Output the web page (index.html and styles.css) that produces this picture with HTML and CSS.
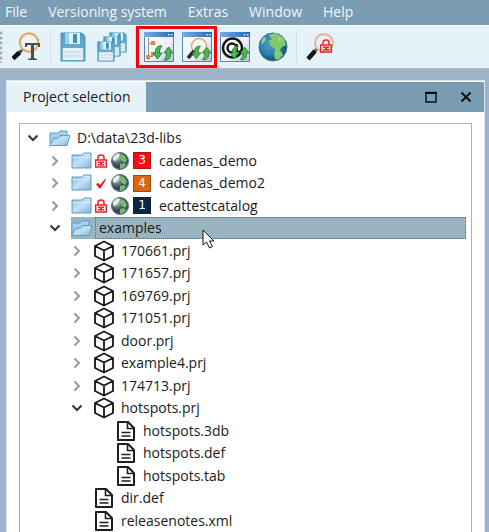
FILE: index.html
```html
<!DOCTYPE html>
<html lang="en">
<head>
<meta charset="utf-8">
<meta name="viewport" content="width=device-width, initial-scale=1">
<title>Project selection</title>
<link rel="stylesheet" href="styles.css">
</head>
<body>
<svg class="defs" aria-hidden="true">
  <defs>
    <linearGradient id="g-folder" x1="0" y1="0" x2="1" y2="1"><stop offset="0" stop-color="#8ebde0"/><stop offset=".5" stop-color="#c5e0f3"/><stop offset="1" stop-color="#7fb3dc"/></linearGradient>
    <linearGradient id="g-bar" x1="0" x2="1"><stop offset="0" stop-color="#77aee6"/><stop offset="1" stop-color="#2468b5"/></linearGradient>
    <linearGradient id="g-win" x1="0" y1="0" x2="1" y2="1"><stop offset="0" stop-color="#fff"/><stop offset=".6" stop-color="#edf0f7"/><stop offset="1" stop-color="#aebbd5"/></linearGradient>
    <linearGradient id="g-disk" x1="0" y1="0" x2="0" y2="1"><stop offset="0" stop-color="#52a1c6"/><stop offset="1" stop-color="#74b6d2"/></linearGradient>
    <radialGradient id="g-lens"><stop offset="0" stop-color="#fff"/><stop offset="1" stop-color="#dbe8ef"/></radialGradient>
    <radialGradient id="g-sea" cx=".4" cy=".4"><stop offset="0" stop-color="#4b9fc5"/><stop offset=".75" stop-color="#2c7eae"/><stop offset="1" stop-color="#205d84"/></radialGradient>
    <radialGradient id="g-night" cx=".3" cy=".25" r=".8"><stop offset="0" stop-color="#dce2e6"/><stop offset=".4" stop-color="#66747f"/><stop offset=".7" stop-color="#2b4054"/><stop offset="1" stop-color="#2e6795"/></radialGradient>
  </defs>
  <symbol id="i-open" viewBox="0 0 12 8"><path d="M1.500 1.500 6 6l4.500-4.500" fill="none" stroke="#333" stroke-width="2"/></symbol>
  <symbol id="i-closed" viewBox="0 0 8 12"><path d="M1.500 1.500 6 6l-4.500 4.500" fill="none" stroke="#999" stroke-width="2"/></symbol>
  <symbol id="i-folder" viewBox="0 0 22 18"><path d="M1 3h10l2-2h7v15H1z" fill="url(#g-folder)" stroke="#5b9dcc"/><path d="M1.500 5.500h18M13 2.500h6" stroke="#d8ecf8"/></symbol>
  <symbol id="i-folder-open" viewBox="0 0 22 18"><path d="M1 16V4h8l2-2h7v5" fill="#a8cfeb" stroke="#5b9dcc"/><path d="M1 16.500 4.500 9H9l2-2.500h10L18 16.500z" fill="url(#g-folder)" stroke="#5b9dcc"/></symbol>
  <symbol id="i-cube" viewBox="0 0 22 22"><path d="M11 1.500 20 6v10l-9 4.500L2 16V6zM2 6l9 4.500L20 6M11 10.500v10" fill="none" stroke="#161616" stroke-width="1.800" stroke-linejoin="round"/></symbol>
  <symbol id="i-file" viewBox="0 0 22 22"><path d="M3 2h10l6 6v12H3z" fill="#fff" stroke="#1e1e1e" stroke-width="2" stroke-linejoin="round"/><path d="M12.500 2.500V8.500H18.500M6.500 12.500h9M6.500 16h9" fill="none" stroke="#1e1e1e" stroke-width="1.600"/></symbol>
  <symbol id="i-lock" viewBox="0 0 14 14"><path d="M4 6V3.500Q4 1 7 1t3 2.500V6M1.700 6h10.600v7H1.700zM4 8.200h6M4 10.800h6" fill="none" stroke="#f3202a" stroke-width="1.500"/><path d="M6 8h2v3H6z" fill="#f3202a"/></symbol>
  <symbol id="i-check" viewBox="0 0 14 14"><path d="m2 8 2-1 2 2 5-6 1 .5L6 13z" fill="#f00d16"/></symbol>
  <symbol id="i-globe-small" viewBox="0 0 20 20"><circle cx="10" cy="10" r="8.500" fill="url(#g-night)" stroke="#5d6f7b"/><path d="m3 6 4-3.500 3 .5-2 4-3 3-2-1z" fill="#e6edf0"/><path d="m11 3 4 2 2 4-2 3-3-2-2-3zM10 13l4-1 2 2-3 3-3 1z" fill="#79bb62"/></symbol>
  <symbol id="i-arrows" viewBox="0 0 20 16"><path d="M9 1C5 0 2 3 2.500 8H0l4.500 6L9 8H6.500C6.500 5 7 3 9 1zM11 15c4 1 7-2 6.500-7H20l-4.500-6L11 8h2.500c0 3-.5 5-2.500 7z" fill="#4db652" stroke="#1f7c34" stroke-width=".9"/></symbol>
  <symbol id="i-window" viewBox="0 0 30 30"><path d="M.5.5h29v29H.5z" fill="url(#g-win)" stroke="#5684b8"/><path d="M0 0h30v5H0z" fill="url(#g-bar)"/><path d="M24 2h1.500v1.500H24zM27 2h1.500v1.500H27z" fill="#e7f4ff"/></symbol>
  <symbol id="i-disk" viewBox="0 0 26 30"><path d="M1 1h21l3 3v25H1z" fill="url(#g-disk)" stroke="#4795bd"/><path d="M5 1h15v11H5z" fill="#9cd2e7"/><path d="M9 1h11v11H9z" fill="#dcf0f6"/><path d="M13 2h4v9h-4z" fill="#438fb7"/><path d="M3 16h20v12H3z" fill="#e6f0f4"/><path d="M4 20h18M4 24h18" stroke="#bad1dc"/></symbol>
</svg>

<nav class="menubar" aria-label="Main menu">
  <button type="button">File</button>
  <button type="button">Versioning system</button>
  <button type="button">Extras</button>
  <button type="button">Window</button>
  <button type="button">Help</button>
</nav>

<div class="toolbar" role="toolbar" aria-label="Tools">
  <span class="grip"></span>
  <button type="button" aria-label="Text search"><svg viewBox="0 0 30 30"><path d="m10 18-4 4" stroke="#444" stroke-width="3"/><path d="m7.500 20.500-6.500 6" stroke="#111" stroke-width="4.500"/><circle cx="17" cy="10.500" r="9.300" fill="url(#g-lens)" stroke="#e8a561" stroke-width="2"/><path d="M13 11h15v4h-1.500l-1-2H22v13l3 1v1h-9v-1l3-1V13h-3.500l-1 2H13z" fill="#4a4e51"/></svg></button>
  <span class="separator"></span>
  <button type="button" aria-label="Save"><svg viewBox="0 0 30 30"><use href="#i-disk" x="1" width="26" height="30"/></svg></button>
  <button type="button" aria-label="Save all"><svg viewBox="0 0 30 30"><use href="#i-disk" x="12" width="18" height="21"/><use href="#i-disk" x="6" y="4" width="18" height="21"/><use href="#i-disk" y="9" width="18" height="21"/></svg></button>
  <span class="separator"></span>
  <div class="marked">
    <button type="button" aria-label="Update structure"><svg viewBox="0 0 30 30"><use href="#i-window" width="30" height="30"/><path d="M4.500 6v22M5 11.500h5M5 24.500h4" fill="none" stroke="#8f9398"/><path d="M7 9h4v4H7zM2 23h4v4H2zM7 20h3v4H7z" fill="#de8b2d"/><use href="#i-arrows" x="9" y="13" width="20" height="16"/></svg></button>
    <button type="button" aria-label="Update search index"><svg viewBox="0 0 30 30"><use href="#i-window" width="30" height="30"/><circle cx="17" cy="14" r="7.500" fill="#f9f6f2" stroke="#dfaa7c" stroke-width="1.500"/><path d="m12 19-6 7" stroke="#292929" stroke-width="3.500"/><use href="#i-arrows" x="10" y="13" width="19" height="16"/></svg></button>
  </div>
  <button type="button" aria-label="Update classification"><svg viewBox="0 0 30 30"><use href="#i-window" width="30" height="30"/><circle cx="12.500" cy="16" r="9.500" fill="#fff" stroke="#171717" stroke-width="2.500"/><circle cx="12" cy="16" r="4.500" fill="none" stroke="#171717" stroke-width="2.500"/><path d="M17 12v7q2 2 4-1" fill="none" stroke="#171717" stroke-width="2"/><use href="#i-arrows" x="10" y="13" width="19" height="16"/></svg></button>
  <button type="button" aria-label="Online catalog"><svg viewBox="0 0 30 30"><circle cx="15" cy="15" r="14" fill="url(#g-sea)" stroke="#3e7790"/><path d="m10 3 8-2 8 5 2 7-4 2-3 4-3 1-1-3-4-3-2-5 3-2zM17 18l6 1 2 4-5 5-3-1-1-5z" fill="#83c96e"/><path d="m5 6 3-1-1 4-4 4zM20 5l3 2-2 2z" fill="#a8d993"/></svg></button>
  <span class="separator"></span>
  <button type="button" aria-label="Restricted search"><svg viewBox="0 0 30 30"><path d="m12 17-4 4" stroke="#555" stroke-width="3"/><path d="m10 19-7 8" stroke="#161616" stroke-width="4.500"/><circle cx="19" cy="11" r="9" fill="url(#g-lens)" stroke="#e8b18c" stroke-width="2"/><use href="#i-lock" x="14" y="7" width="14" height="14"/></svg></button>
</div>

<main class="panel">
  <header class="titlebar">
    <h1>Project selection</h1>
    <div class="window-buttons">
      <button type="button" aria-label="Maximize"><svg viewBox="0 0 12 12"><path d="M1 1.500h10V11H1z" fill="none" stroke="#111" stroke-width="1.500"/><path d="M0 1h12v2H0z"/></svg></button>
      <button type="button" aria-label="Close"><svg viewBox="0 0 12 12"><path d="m1.500 1.500 9 9m0-9-9 9" stroke="#111" stroke-width="2"/></svg></button>
    </div>
  </header>
  <ul class="tree" aria-label="Projects">
    <li class="row level-0"><button class="toggle" type="button" aria-label="Collapse"><svg class="open"><use href="#i-open"/></svg></button><div class="item"><svg class="icon folder"><use href="#i-folder-open"/></svg><span class="name">D:\data\23d-libs</span></div></li>
    <li class="row level-1"><button class="toggle" type="button" aria-label="Expand"><svg class="closed"><use href="#i-closed"/></svg></button><div class="item"><svg class="icon folder"><use href="#i-folder"/></svg><svg class="state"><use href="#i-lock"/></svg><svg class="globe"><use href="#i-globe-small"/></svg><span class="badge red">3</span><span class="name">cadenas_demo</span></div></li>
    <li class="row level-1"><button class="toggle" type="button" aria-label="Expand"><svg class="closed"><use href="#i-closed"/></svg></button><div class="item"><svg class="icon folder"><use href="#i-folder"/></svg><svg class="state"><use href="#i-check"/></svg><svg class="globe"><use href="#i-globe-small"/></svg><span class="badge orange">4</span><span class="name">cadenas_demo2</span></div></li>
    <li class="row level-1"><button class="toggle" type="button" aria-label="Expand"><svg class="closed"><use href="#i-closed"/></svg></button><div class="item"><svg class="icon folder"><use href="#i-folder"/></svg><svg class="state"><use href="#i-lock"/></svg><svg class="globe"><use href="#i-globe-small"/></svg><span class="badge navy">1</span><span class="name">ecattestcatalog</span></div></li>
    <li class="row level-1"><button class="toggle" type="button" aria-label="Collapse"><svg class="open"><use href="#i-open"/></svg></button><div class="item selected"><svg class="icon folder"><use href="#i-folder-open"/></svg><span class="name">examples</span><svg class="pointer" viewBox="0 0 13 20" aria-hidden="true"><path d="M1 1v15l3.500-3 3 6 3-1.500-3-5.500H12z" fill="#fff" stroke="#111"/></svg></div></li>
    <li class="row level-2"><button class="toggle" type="button" aria-label="Expand"><svg class="closed"><use href="#i-closed"/></svg></button><div class="item"><svg class="icon"><use href="#i-cube"/></svg><span class="name">170661.prj</span></div></li>
    <li class="row level-2"><button class="toggle" type="button" aria-label="Expand"><svg class="closed"><use href="#i-closed"/></svg></button><div class="item"><svg class="icon"><use href="#i-cube"/></svg><span class="name">171657.prj</span></div></li>
    <li class="row level-2"><button class="toggle" type="button" aria-label="Expand"><svg class="closed"><use href="#i-closed"/></svg></button><div class="item"><svg class="icon"><use href="#i-cube"/></svg><span class="name">169769.prj</span></div></li>
    <li class="row level-2"><button class="toggle" type="button" aria-label="Expand"><svg class="closed"><use href="#i-closed"/></svg></button><div class="item"><svg class="icon"><use href="#i-cube"/></svg><span class="name">171051.prj</span></div></li>
    <li class="row level-2"><button class="toggle" type="button" aria-label="Expand"><svg class="closed"><use href="#i-closed"/></svg></button><div class="item"><svg class="icon"><use href="#i-cube"/></svg><span class="name">door.prj</span></div></li>
    <li class="row level-2"><button class="toggle" type="button" aria-label="Expand"><svg class="closed"><use href="#i-closed"/></svg></button><div class="item"><svg class="icon"><use href="#i-cube"/></svg><span class="name">example4.prj</span></div></li>
    <li class="row level-2"><button class="toggle" type="button" aria-label="Expand"><svg class="closed"><use href="#i-closed"/></svg></button><div class="item"><svg class="icon"><use href="#i-cube"/></svg><span class="name">174713.prj</span></div></li>
    <li class="row level-2"><button class="toggle" type="button" aria-label="Collapse"><svg class="open"><use href="#i-open"/></svg></button><div class="item"><svg class="icon"><use href="#i-cube"/></svg><span class="name">hotspots.prj</span></div></li>
    <li class="row level-3"><span class="toggle"></span><div class="item"><svg class="icon"><use href="#i-file"/></svg><span class="name">hotspots.3db</span></div></li>
    <li class="row level-3"><span class="toggle"></span><div class="item"><svg class="icon"><use href="#i-file"/></svg><span class="name">hotspots.def</span></div></li>
    <li class="row level-3"><span class="toggle"></span><div class="item"><svg class="icon"><use href="#i-file"/></svg><span class="name">hotspots.tab</span></div></li>
    <li class="row level-2"><span class="toggle"></span><div class="item"><svg class="icon"><use href="#i-file"/></svg><span class="name">dir.def</span></div></li>
    <li class="row level-2"><span class="toggle"></span><div class="item"><svg class="icon"><use href="#i-file"/></svg><span class="name">releasenotes.xml</span></div></li>
  </ul>
</main>
</body>
</html>
```
FILE: styles.css
```css
* { box-sizing: border-box; }
html, body { height: 100%; }
body {
  margin: 0;
  display: flex;
  flex-direction: column;
  overflow: hidden;
  background: #9bb4ca;
  color: #1a1a1a;
  font: 14px/20px "Open Sans", "Noto Sans", sans-serif;
}
button {
  margin: 0;
  padding: 0;
  border: 0;
  background: none;
  color: inherit;
  font: inherit;
}
svg { display: block; flex: none; }
.defs { position: absolute; width: 0; height: 0; }

.menubar {
  display: flex;
  flex: none;
  gap: 21px;
  height: 25px;
  padding: 0 5px 2px;
  background: #7b9db3;
  color: #f0f6fa;
}

.toolbar {
  display: flex;
  flex: none;
  align-items: center;
  gap: 8px;
  height: 44px;
  border-top: 1px solid #fff;
  border-bottom: 1px solid #b3b9bd;
  background: #e5f2f8;
}
.toolbar button, .toolbar button svg { width: 30px; height: 30px; }
.grip {
  width: 4px;
  height: 32px;
  background: radial-gradient(circle at 1px 2px, #a4adb2 1px, transparent 2px) 0 0 / 4px 5px;
}
.separator { width: 1px; height: 32px; background: #d3dde3; }
.marked { position: relative; display: flex; gap: 8px; }
.marked::after {
  content: "";
  position: absolute;
  inset: -6px -5px -6px -8px;
  border: 3px solid #fb0006;
  pointer-events: none;
}

.panel {
  display: flex;
  flex: 1 0 auto;
  flex-direction: column;
  margin: 11px 4px 0 6px;
  border: 1px solid #dce6ed;
  border-bottom: 0;
  background: #fff;
}
.titlebar {
  display: flex;
  justify-content: space-between;
  height: 31px;
  border-top: 1px solid #fff;
  background: #7b9db3;
}
.titlebar h1 {
  margin: 0;
  padding: 5px 16px;
  background: #e5f2f8;
  font-size: 14px;
  font-weight: 400;
  line-height: 20px;
}
.window-buttons { display: flex; gap: 23px; padding-right: 12px; }
.window-buttons svg { width: 12px; height: 12px; }

.tree {
  display: grid;
  flex: 1;
  grid-template-rows: repeat(9, 22px 23px);
  margin: 11px 12px 0;
  padding: 3px 5px 0 3px;
  border: 1px solid #b0b0b0;
  border-bottom: 0;
  list-style: none;
}
.row { display: flex; align-items: stretch; }
.level-1 { padding-left: 22px; }
.level-2 { padding-left: 44px; }
.level-3 { padding-left: 66px; }
.toggle {
  display: grid;
  place-items: center;
  width: 20px;
  margin-right: 6px;
}
.open { width: 12px; height: 8px; }
.closed { width: 8px; height: 12px; }
.item { position: relative; display: flex; flex: 1; align-items: center; }
.icon { width: 22px; height: 22px; }
.folder { height: 18px; }
.name { margin-left: 2px; padding: 0 4px; white-space: nowrap; }
.state { width: 14px; height: 14px; margin-left: 1px; }
.globe { width: 20px; height: 20px; margin-left: 2px; }
.badge {
  display: grid;
  place-items: center;
  width: 18px;
  height: 17px;
  margin: 0 2px 0 3px;
  color: #fff;
  font: 12px/15px "DejaVu Sans", sans-serif;
}
.red { border: 1px solid #ad171c; background: #f70a12; }
.orange { border: 1px solid #a34a0b; background: #dc6510; }
.navy { border: 1px solid #14253b; background: #09264b; }
.selected { background: #9bb4c1; }
.selected .name { flex: 1; align-self: stretch; border: 1px dotted #57656d; padding: 0 3px; }
.pointer { position: absolute; top: 12px; left: 131px; z-index: 1; width: 13px; height: 20px; }
```
